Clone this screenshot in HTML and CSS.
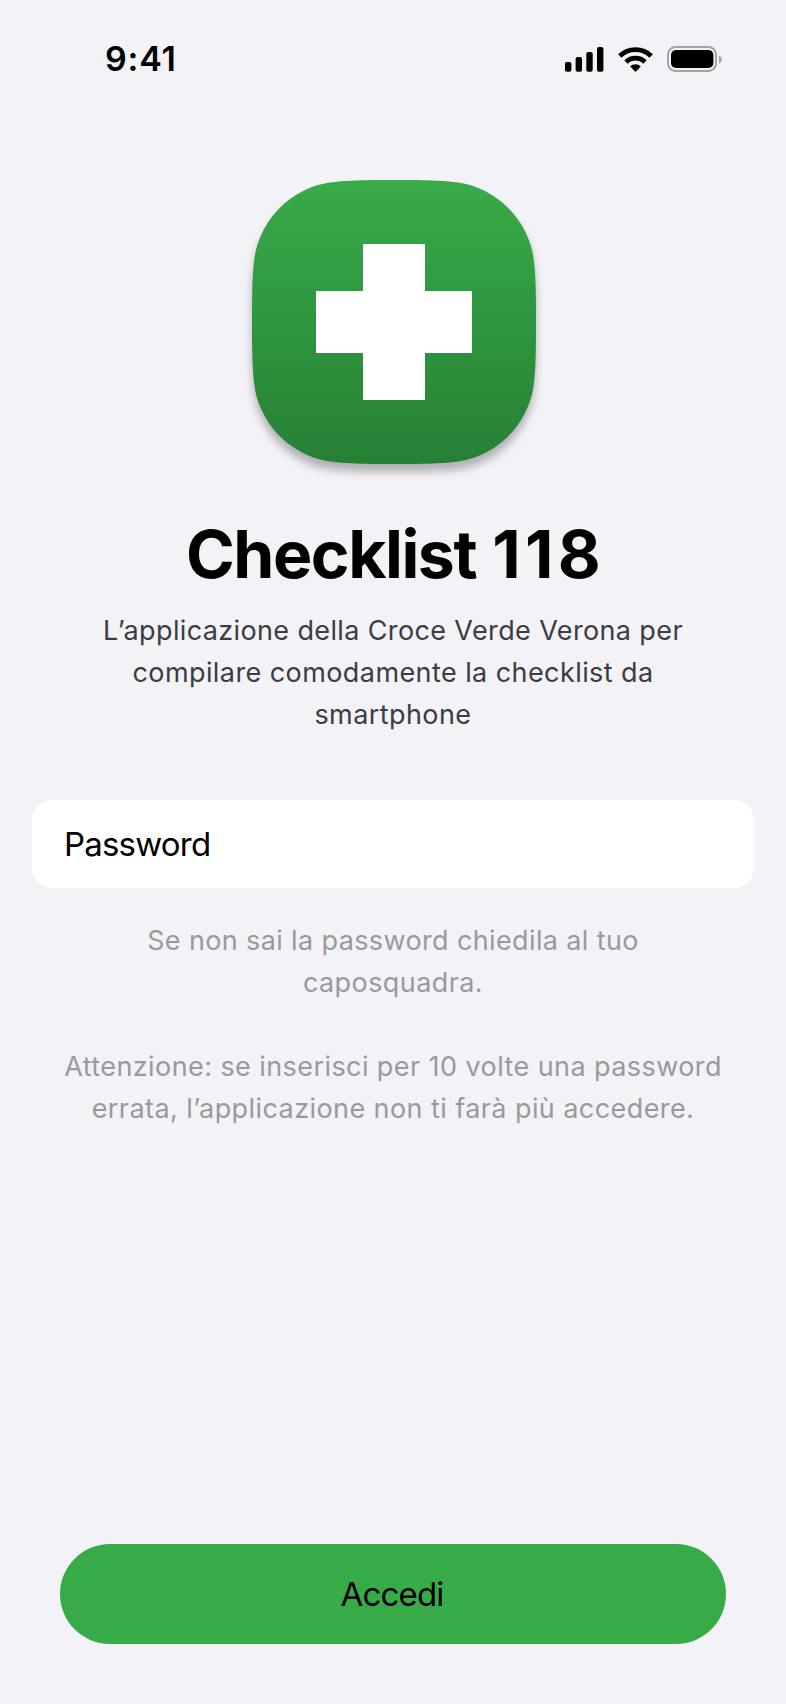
FILE: index.html
```html
<!DOCTYPE html>
<html lang="it">
<head>
<meta charset="utf-8">
<title>Checklist 118</title>
<link rel="stylesheet" href="styles.css">
</head>
<body>
<div class="screen">
  <header class="status">
    <span class="time">9:41</span>
    <svg class="indicators" width="160" height="30" viewBox="564 44 160 30">
      <rect x="565" y="62" width="6.4" height="9.8" rx="2"/>
      <rect x="575.6" y="57" width="6.4" height="14.8" rx="2"/>
      <rect x="586.3" y="52" width="6.4" height="19.8" rx="2"/>
      <rect x="597" y="47" width="6.4" height="24.8" rx="2"/>
      <g fill="none" stroke="#000" stroke-width="4.8">
        <path d="M619.8 55.9A22.6 22.6 0 0 1 651.2 55.9"/>
        <path d="M626 62A13.8 13.8 0 0 1 645 62"/>
      </g>
      <path d="M630.2 66.3A7.6 7.6 0 0 1 640.8 66.3L636.3 71.2Q635.5 72 634.7 71.2Z"/>
      <rect x="668" y="47" width="48" height="24" rx="7.5" fill="none" stroke="#a3a3a6" stroke-width="2"/>
      <rect x="671" y="50" width="42.4" height="18" rx="5"/>
      <path d="M719 55.4V63.4C720.7 62.7 721.8 61.2 721.8 59.4S720.7 56.1 719 55.4Z" fill="#a3a3a6"/>
    </svg>
  </header>
  <main class="content">
    <svg class="logo" width="284" height="284" viewBox="0 0 284 284">
      <defs>
        <linearGradient id="green" x1="0" y1="0" x2="0" y2="1">
          <stop offset="0" stop-color="#38ab49"/>
          <stop offset="1" stop-color="#268034"/>
        </linearGradient>
      </defs>
      <path fill="url(#green)" d="M142 0C172 0 202 .1 218 5C247.600 14.100 269.900 36.400 279 66C283.900 82 284 112 284 142S283.900 202 279 218C269.900 247.600 247.600 269.900 218 279C202 283.900 172 284 142 284S82 283.900 66 279C36.400 269.900 14.100 247.600 5 218C.1 202 0 172 0 142S.1 82 5 66C14.100 36.400 36.400 14.100 66 5C82 .1 112 0 142 0Z"/>
      <path fill="#fff" d="M111 64h62v47h47v62h-47v47h-62v-47H64v-62h47z"/>
    </svg>
    <h1 class="title">Checklist <span class="number">118</span></h1>
    <p class="text intro">
      <span class="line first">L’applicazione della Croce Verde Verona per</span>
      <span class="line">compilare comodamente la checklist da</span>
      <span class="line">smartphone</span>
    </p>
    <div class="field"><span class="field-label">Password</span></div>
    <p class="text hint">
      <span class="line first">Se non sai la password chiedila al tuo</span>
      <span class="line">caposquadra.</span>
    </p>
    <p class="text hint warning">
      <span class="line">Attenzione: se inserisci per 10 volte una password</span>
      <span class="line">errata, l’applicazione non ti farà più accedere.</span>
    </p>
  </main>
  <button class="submit"><span class="submit-label">Accedi</span></button>
</div>
</body>
</html>
```
FILE: styles.css
```css
* { box-sizing: border-box; }
body {
  margin: 0;
  background: #f2f2f7;
  color: #000;
  font-family: Inter, "Liberation Sans", sans-serif;
}
.screen {
  width: 786px;
  height: 1704px;
  display: flex;
  flex-direction: column;
}
.status {
  height: 118px;
  padding: 0 62px 0 105px;
  display: flex;
  justify-content: space-between;
}
.time {
  margin-top: 39px;
  font-size: 34px;
  line-height: 40px;
  font-weight: 600;
  letter-spacing: 0.8px;
}
.indicators { margin-top: 44px; }
.content {
  padding: 62px 32px 0;
  display: flex;
  flex-direction: column;
  align-items: center;
}
.logo {
  display: block;
  margin-left: 2px;
  overflow: visible;
  filter: drop-shadow(0 8px 4px rgba(0, 0, 0, 0.27));
}
.title {
  margin: 50px 0 0;
  font-size: 66px;
  line-height: 80px;
  font-weight: 700;
  letter-spacing: -1.45px;
  white-space: nowrap;
}
.number {
  margin-left: 2px;
  margin-right: -5px;
  letter-spacing: 4.3px;
}
.text {
  margin: 0;
  font-size: 27px;
  line-height: 42px;
  letter-spacing: 0.42px;
  text-align: center;
  white-space: nowrap;
}
.line { display: block; }
.first { letter-spacing: 0.37px; }
.intro {
  margin-top: 16px;
  color: #3d3c42;
}
.field {
  width: 722px;
  height: 88px;
  margin-top: 64px;
  padding: 0 32px;
  display: flex;
  align-items: center;
  border-radius: 20px;
  background: #fff;
}
.field-label, .submit-label {
  font-size: 33px;
  line-height: 40px;
  letter-spacing: -0.8px;
}
.hint {
  margin-top: 32px;
  color: #9a999e;
}
.warning { margin-top: 42px; }
.submit {
  width: 666px;
  height: 100px;
  margin: auto 60px 60px;
  padding: 0 2px 0 0;
  border: 0;
  border-radius: 50px;
  background: #38ab49;
  color: #000;
  font-family: inherit;
}
```
